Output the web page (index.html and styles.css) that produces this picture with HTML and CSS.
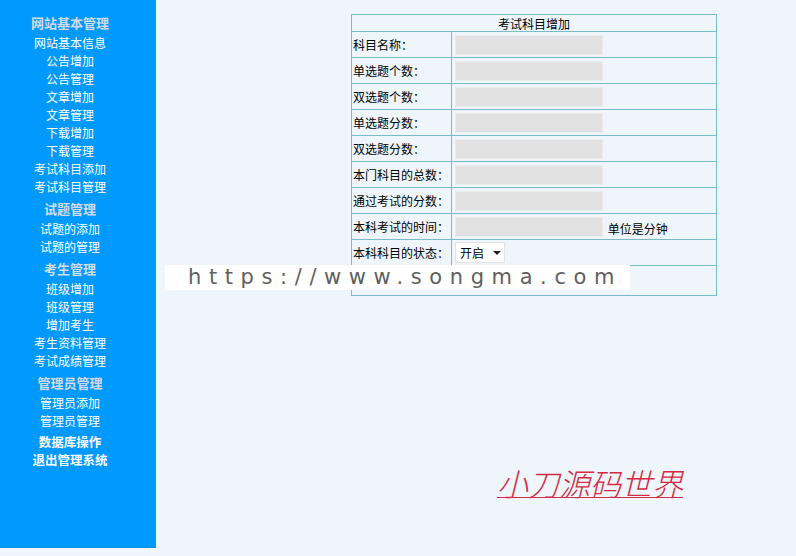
FILE: index.html
```html
<!DOCTYPE html>
<html lang="zh-CN">
<head>
    <meta charset="UTF-8">
    <title>考试科目增加</title>
    <link rel="stylesheet" href="styles.css">
</head>
<body>
    <div class="page">
        <div class="menu">
            <div class="menu-title">网站基本管理</div>
            <a class="menu-item">网站基本信息</a>
            <a class="menu-item">公告增加</a>
            <a class="menu-item">公告管理</a>
            <a class="menu-item">文章增加</a>
            <a class="menu-item">文章管理</a>
            <a class="menu-item">下载增加</a>
            <a class="menu-item">下载管理</a>
            <a class="menu-item">考试科目添加</a>
            <a class="menu-item">考试科目管理</a>
            <div class="menu-title">试题管理</div>
            <a class="menu-item">试题的添加</a>
            <a class="menu-item">试题的管理</a>
            <div class="menu-title">考生管理</div>
            <a class="menu-item">班级增加</a>
            <a class="menu-item">班级管理</a>
            <a class="menu-item">增加考生</a>
            <a class="menu-item">考生资料管理</a>
            <a class="menu-item">考试成绩管理</a>
            <div class="menu-title">管理员管理</div>
            <a class="menu-item">管理员添加</a>
            <a class="menu-item">管理员管理</a>
            <a class="menu-item strong first">数据库操作</a>
            <a class="menu-item strong">退出管理系统</a>
        </div>

        <div class="main">
            <table class="form-table">
                <tr><th colspan="2">考试科目增加</th></tr>
                <tr><td class="label">科目名称：</td><td><input type="text"></td></tr>
                <tr><td class="label">单选题个数：</td><td><input type="text"></td></tr>
                <tr><td class="label">双选题个数：</td><td><input type="text"></td></tr>
                <tr><td class="label">单选题分数：</td><td><input type="text"></td></tr>
                <tr><td class="label">双选题分数：</td><td><input type="text"></td></tr>
                <tr><td class="label">本门科目的总数：</td><td><input type="text"></td></tr>
                <tr><td class="label">通过考试的分数：</td><td><input type="text"></td></tr>
                <tr><td class="label">本科考试的时间：</td><td><input type="text"> <span class="unit">单位是分钟</span></td></tr>
                <tr>
                    <td class="label">本科科目的状态：</td>
                    <td><span class="select">开启<span class="caret"></span></span></td>
                </tr>
                <tr class="empty"><td colspan="2"></td></tr>
            </table>

            <div class="watermark">https://www.songma.com</div>
            <div class="brand">小刀源码世界</div>
        </div>
    </div>
</body>
</html>
```

FILE: styles.css
```css
* {
    box-sizing: border-box;
}

body {
    margin: 0;
    font-family: "Noto Sans CJK SC", "Liberation Sans", sans-serif;
    font-size: 12px;
    background-color: #eef6fc;
}

.page {
    display: flex;
    width: 796px;
    height: 556px;
    position: relative;
}

.menu {
    width: 156px;
    height: 548px;
    background-color: #0099fe;
    border-bottom: 1px solid #1290de;
    display: flex;
    flex-direction: column;
    align-items: center;
    padding: 13px 16px 0 0;
}

.menu-title {
    color: #d3dbe8;
    font-size: 13px;
    font-weight: bold;
    line-height: 20px;
    margin: 3px 0 1px;
}

.menu-title:first-child {
    margin-top: 0;
}

.menu-item {
    color: #ffffff;
    font-size: 12px;
    line-height: 18px;
}

.menu-item.strong {
    font-weight: bold;
    font-size: 12.5px;
}

.menu-item.first {
    margin-top: 3px;
}

.main {
    flex: 1;
    padding: 14px 0 0 195px;
}

.form-table {
    width: 366px;
    border-collapse: collapse;
    border: 1px solid #78bccc;
    color: #000;
}

.form-table th {
    font-weight: normal;
    font-size: 12px;
    height: 17px;
    line-height: 15px;
    padding: 0;
    border: 1px solid #78bccc;
}

.form-table td {
    border: 1px solid #78bccc;
    height: 26px;
    padding: 0 0 0 3px;
    white-space: nowrap;
}

.form-table td.label {
    width: 100px;
    padding-left: 1px;
}

.form-table input {
    width: 148px;
    height: 20px;
    border: 1px solid #ececec;
    background-color: #e1e1e1;
    vertical-align: middle;
    margin: 0;
}

.unit {
    margin-left: 2px;
    vertical-align: -4px;
}

.select {
    display: inline-flex;
    align-items: center;
    width: 50px;
    height: 21px;
    padding-left: 4px;
    background-color: #fff;
    border: 1px solid #e4e4e4;
    vertical-align: middle;
    font-size: 12px;
}

.caret {
    margin-left: 9px;
    border-left: 4px solid transparent;
    border-right: 4px solid transparent;
    border-top: 4px solid #222;
}

.form-table tr.empty td {
    height: 30px;
}

.watermark {
    position: absolute;
    left: 165px;
    top: 265px;
    width: 465px;
    height: 25px;
    background-color: #fff;
    color: #5f5f5f;
    font-family: "DejaVu Sans", sans-serif;
    font-size: 21px;
    line-height: 25px;
    letter-spacing: 7.6px;
    padding-left: 23px;
    white-space: nowrap;
    overflow: hidden;
}

.brand {
    position: absolute;
    left: 497px;
    top: 464px;
    color: #d42a44;
    font-size: 31px;
    font-weight: 300;
    font-style: italic;
    text-decoration: underline;
    text-decoration-thickness: 1px;
    text-underline-offset: 1px;
    line-height: 38px;
}
```
